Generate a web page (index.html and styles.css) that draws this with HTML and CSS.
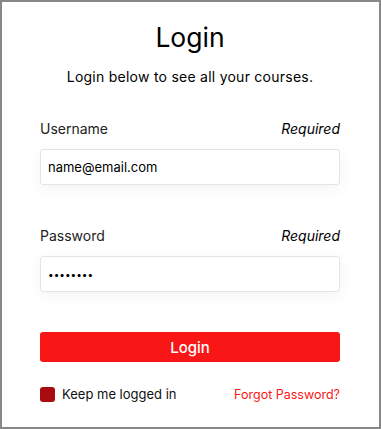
FILE: index.html
```html
<!DOCTYPE html>
<html>
<head>
<meta charset="utf-8">
<link rel="stylesheet" href="styles.css">
</head>
<body>
<div class="card">
  <h1 class="title">Login</h1>
  <p class="subtitle">Login below to see all your courses.</p>
  <div class="field">
    <div class="label-row"><span class="label">Username</span><span class="req">Required</span></div>
    <div class="input">name@email.com</div>
  </div>
  <div class="field">
    <div class="label-row"><span class="label">Password</span><span class="req">Required</span></div>
    <div class="input pw">••••••••</div>
  </div>
  <button class="btn">Login</button>
  <div class="bottom-row">
    <label class="keep"><span class="box"></span>Keep me logged in</label>
    <a class="forgot">Forgot Password?</a>
  </div>
</div>
</body>
</html>
```
FILE: styles.css
```css
html, body { margin: 0; padding: 0; background: #fff; }
body { font-family: "Inter", "Noto Sans", sans-serif; color: #111; }
.card {
  width: 381px; height: 429px; box-sizing: border-box;
  border: 2px solid #878787;
  padding: 0 39px 0 38px;
  display: flex; flex-direction: column;
}
.title {
  margin: 17px 0 0; font-size: 26.5px; font-weight: 400; text-align: center; line-height: 36px; color: #000;
}
.subtitle {
  margin: 12px 0 0; font-size: 14px; letter-spacing: 0.25px; text-align: center; line-height: 20px; color: #000;
}
.field { margin-top: 31px; }
.field + .field { margin-top: 40px; }
.label-row { display: flex; justify-content: space-between; align-items: center; height: 20px; }
.label { font-size: 14px; color: #222; }
.req { font-size: 14px; font-style: italic; color: #000; }
.input {
  margin-top: 11px; height: 36px; box-sizing: border-box;
  border: 1px solid #e4e4e4; border-radius: 3px;
  box-shadow: 0 4px 16px rgba(0,0,0,0.05);
  padding: 0 7px; display: flex; align-items: center;
  font-size: 13px; color: #000;
}
.input.pw { font-size: 10px; letter-spacing: 0; }
.btn {
  margin-top: 40px; height: 30px; border: 0; border-radius: 3px;
  background: #f91616; color: #fff; font-family: inherit;
  font-size: 15px; font-weight: 500; padding: 0;
}
.bottom-row { margin-top: 24px; display: flex; justify-content: space-between; align-items: center; }
.keep { display: flex; align-items: center; font-size: 13px; color: #111; }
.box { width: 15px; height: 15px; border-radius: 3px; background: #a80c10; margin-right: 7px; }
.forgot { font-size: 12.5px; color: #f91616; }
```
